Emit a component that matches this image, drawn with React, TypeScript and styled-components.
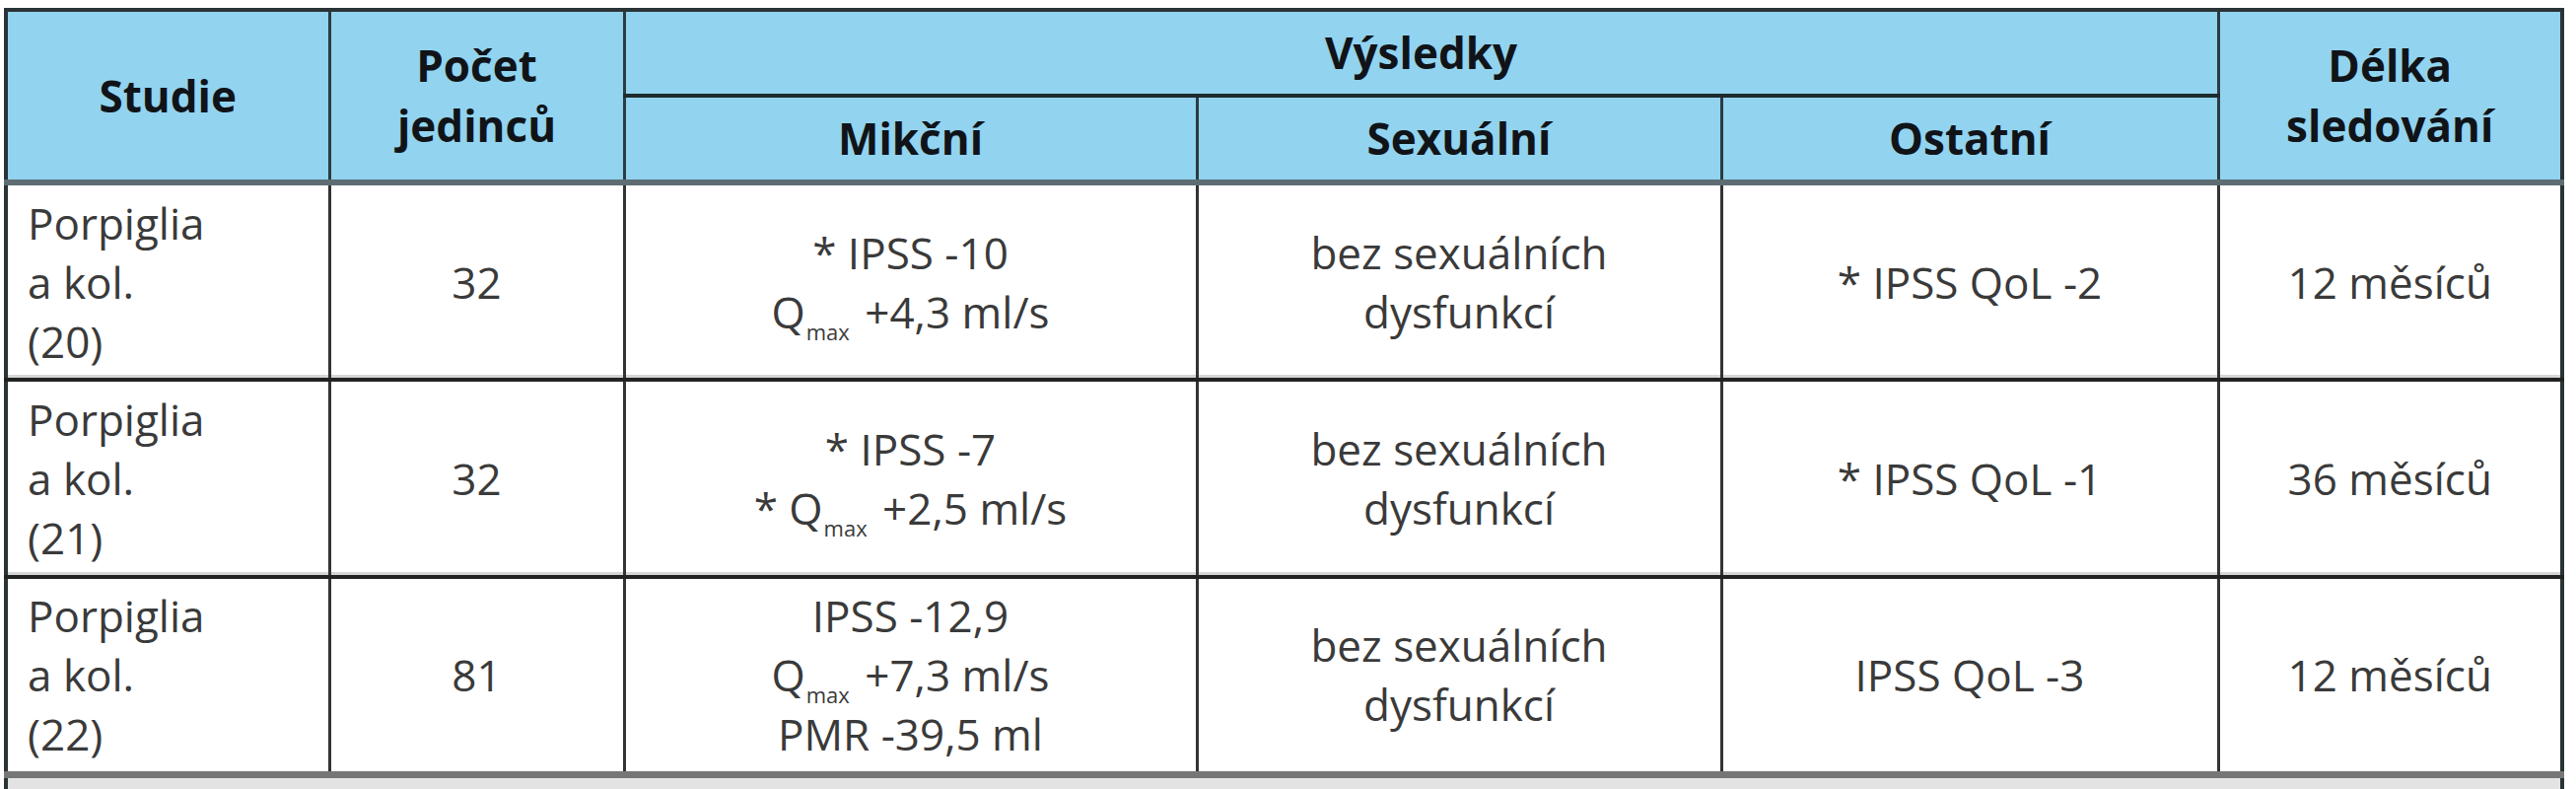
import React from "react";
import styled, { createGlobalStyle } from "styled-components";

const Global = createGlobalStyle`
  html, body { margin: 0; padding: 0; background: #ffffff; }
  body { font-family: "Open Sans", "Noto Sans", "Liberation Sans", sans-serif; }
`;

const Page = styled.div`
  padding: 8px 0 0 4px;
  width: 2613px;
  box-sizing: border-box;
`;

const Table = styled.table`
  width: 2597px;
  border-collapse: collapse;
  table-layout: fixed;
  border: 4px solid #2a3336;
`;

const Col = styled.col<{ $w: number }>`
  width: ${(p) => p.$w}px;
`;

const HeadRow = styled.tr<{ $h: number }>`
  height: ${(p) => p.$h}px;
`;

const Th = styled.th<{ $split?: boolean; $last?: boolean }>`
  background: #92d3ef;
  color: #101418;
  font-weight: 700;
  font-size: 44px;
  line-height: 61px;
  text-align: center;
  vertical-align: middle;
  padding: 0 10px;
  border-left: 3px solid #2c3b40;
  border-right: 3px solid #2c3b40;
  border-top: 4px solid #2a3336;
  border-bottom: ${(p) => (p.$split ? "4px solid #1d2a2e" : "6px solid #5d6d73")};
`;

const BodyRow = styled.tr`
  height: 200px;
`;

const Td = styled.td<{ $align?: "left" | "center"; $lastRow?: boolean }>`
  color: #3a3a3a;
  font-weight: 400;
  font-size: 44px;
  line-height: 60px;
  text-align: ${(p) => p.$align ?? "center"};
  vertical-align: middle;
  padding: ${(p) => (p.$align === "left" ? "0 10px 0 20px" : "0 10px")};
  border-left: 3px solid #333333;
  border-right: 3px solid #333333;
  border-bottom: ${(p) => (p.$lastRow ? "7px solid #767676" : "4px solid #222222")};
  box-shadow: ${(p) => (p.$lastRow ? "none" : "inset 0 -3px 0 #d6d6d6")};
`;

const Sub = styled.span`
  font-size: 22px;
  line-height: 0;
  vertical-align: -0.55em;
  margin-left: 1px;
  margin-right: 4px;
`;

const FootCell = styled.td`
  height: 40px;
  background: #e3e3e3;
  padding: 0;
`;

type Row = {
  study: string[];
  count: string;
  mikcni: React.ReactNode[];
  sexualni: string[];
  ostatni: string;
  delka: string;
};

const Q = ({ star, value }: { star?: boolean; value: string }) => (
  <>
    {star ? "* " : ""}Q<Sub>max</Sub> {value}
  </>
);

const rows: Row[] = [
  {
    study: ["Porpiglia", "a kol.", "(20)"],
    count: "32",
    mikcni: ["* IPSS -10", <Q value="+4,3 ml/s" />],
    sexualni: ["bez sexuálních", "dysfunkcí"],
    ostatni: "* IPSS QoL -2",
    delka: "12 měsíců",
  },
  {
    study: ["Porpiglia", "a kol.", "(21)"],
    count: "32",
    mikcni: ["* IPSS -7", <Q star value="+2,5 ml/s" />],
    sexualni: ["bez sexuálních", "dysfunkcí"],
    ostatni: "* IPSS QoL -1",
    delka: "36 měsíců",
  },
  {
    study: ["Porpiglia", "a kol.", "(22)"],
    count: "81",
    mikcni: ["IPSS -12,9", <Q value="+7,3 ml/s" />, "PMR -39,5 ml"],
    sexualni: ["bez sexuálních", "dysfunkcí"],
    ostatni: "IPSS QoL -3",
    delka: "12 měsíců",
  },
];

const Lines = ({ items }: { items: React.ReactNode[] }) => (
  <>
    {items.map((it, i) => (
      <React.Fragment key={i}>
        {i > 0 && <br />}
        {it}
      </React.Fragment>
    ))}
  </>
);

export default function App() {
  return (
    <>
      <Global />
      <Page>
        <Table>
          <colgroup>
            <Col $w={328} />
            <Col $w={299} />
            <Col $w={581} />
            <Col $w={532} />
            <Col $w={504} />
            <Col $w={349} />
          </colgroup>
          <thead>
            <HeadRow $h={87}>
              <Th rowSpan={2}>Studie</Th>
              <Th rowSpan={2}>
                Počet
                <br />
                jedinců
              </Th>
              <Th colSpan={3} $split>
                Výsledky
              </Th>
              <Th rowSpan={2}>
                Délka
                <br />
                sledování
              </Th>
            </HeadRow>
            <HeadRow $h={88}>
              <Th>Mikční</Th>
              <Th>Sexuální</Th>
              <Th>Ostatní</Th>
            </HeadRow>
          </thead>
          <tbody>
            {rows.map((r, i) => (
              <BodyRow key={i}>
                <Td $align="left" $lastRow={i === rows.length - 1}>
                  <Lines items={r.study} />
                </Td>
                <Td $lastRow={i === rows.length - 1}>{r.count}</Td>
                <Td $lastRow={i === rows.length - 1}>
                  <Lines items={r.mikcni} />
                </Td>
                <Td $lastRow={i === rows.length - 1}>
                  <Lines items={r.sexualni} />
                </Td>
                <Td $lastRow={i === rows.length - 1}>{r.ostatni}</Td>
                <Td $lastRow={i === rows.length - 1}>{r.delka}</Td>
              </BodyRow>
            ))}
          </tbody>
          <tfoot>
            <tr>
              <FootCell colSpan={6} />
            </tr>
          </tfoot>
        </Table>
      </Page>
    </>
  );
}
